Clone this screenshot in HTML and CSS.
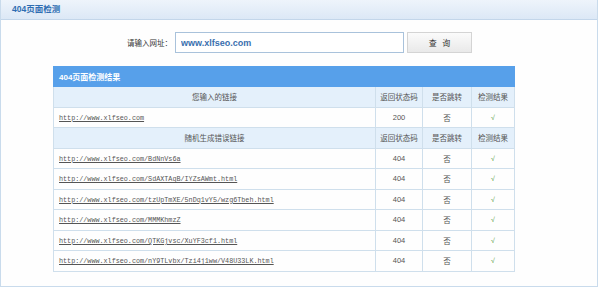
FILE: index.html
```html
<!DOCTYPE html>
<html lang="zh-CN">
<head>
        <meta charset="UTF-8" />
        <title>404页面检测</title>
        <link rel="stylesheet" href="styles.css">
</head>
<body>

<div class="panel">
        <div class="panel-title">404页面检测</div>

        <form class="search" onsubmit="return false;">
                <label for="url">请输入网址：</label>
                <input id="url" type="text" value="www.xlfseo.com">
                <button type="submit">查&nbsp;&nbsp;&nbsp;询</button>
        </form>

        <table class="result">
                <tr>
                        <th class="caption" colspan="4">404页面检测结果</th>
                </tr>
                <tr class="sub">
                        <td class="col-link">您输入的链接</td>
                        <td class="col-code">返回状态码</td>
                        <td class="col-jump">是否跳转</td>
                        <td class="col-ok">检测结果</td>
                </tr>
                <tr>
                        <td class="link"><a href="#">http://www.xlfseo.com</a></td>
                        <td>200</td>
                        <td>否</td>
                        <td class="ok">√</td>
                </tr>
                <tr class="sub">
                        <td>随机生成错误链接</td>
                        <td>返回状态码</td>
                        <td>是否跳转</td>
                        <td>检测结果</td>
                </tr>
                <tr>
                        <td class="link"><a href="#">http://www.xlfseo.com/BdNnVs6a</a></td>
                        <td>404</td>
                        <td>否</td>
                        <td class="ok">√</td>
                </tr>
                <tr>
                        <td class="link"><a href="#">http://www.xlfseo.com/SdAXTAqB/IYZsAWmt.html</a></td>
                        <td>404</td>
                        <td>否</td>
                        <td class="ok">√</td>
                </tr>
                <tr>
                        <td class="link"><a href="#">http://www.xlfseo.com/tzUpTmXE/5nDq1vY5/wzg6Tbeh.html</a></td>
                        <td>404</td>
                        <td>否</td>
                        <td class="ok">√</td>
                </tr>
                <tr>
                        <td class="link"><a href="#">http://www.xlfseo.com/MMMKhmzZ</a></td>
                        <td>404</td>
                        <td>否</td>
                        <td class="ok">√</td>
                </tr>
                <tr>
                        <td class="link"><a href="#">http://www.xlfseo.com/QTKGjvsc/XuYF3cf1.html</a></td>
                        <td>404</td>
                        <td>否</td>
                        <td class="ok">√</td>
                </tr>
                <tr>
                        <td class="link"><a href="#">http://www.xlfseo.com/nY9TLvbx/Tzi4j1ww/V48U33LK.html</a></td>
                        <td>404</td>
                        <td>否</td>
                        <td class="ok">√</td>
                </tr>
        </table>
</div>

</body>
</html>
```

FILE: styles.css
```css
body {
        margin: 0;
        background: #fff;
        font-family: "Liberation Sans", "Noto Sans CJK SC", sans-serif;
        color: #333;
}

.panel {
        box-sizing: border-box;
        width: 598px;
        height: 287px;
        border: 1px solid #c9dbec;
        border-top: none;
        background: #fefefe;
}

.panel-title {
        box-sizing: border-box;
        height: 20px;
        line-height: 19px;
        padding-left: 11px;
        background: linear-gradient(#eef4fb, #dce8f6);
        border-bottom: 1px solid #c3d6ea;
        color: #2f6db2;
        font-size: 8.5px;
        font-weight: bold;
}

.search {
        display: flex;
        align-items: center;
        margin: 12px 0 0 126px;
        height: 21px;
}

.search label {
        font-size: 7.5px;
        color: #333;
        width: 48px;
}

.search input {
        box-sizing: border-box;
        width: 229px;
        height: 21px;
        margin: 0;
        padding: 0 5px;
        border: 1px solid #a9c2db;
        color: #3a6fae;
        font-family: "Liberation Sans", sans-serif;
        font-size: 9px;
        font-weight: bold;
        outline: none;
}

.search button {
        box-sizing: border-box;
        width: 65px;
        height: 21px;
        margin-left: 3px;
        border: 1px solid #d4d4d4;
        background: linear-gradient(#fbfbfb, #e9e9e9);
        color: #333;
        font-family: "Noto Sans CJK SC", sans-serif;
        font-size: 8px;
        padding: 0;
}

.result {
        margin: 13px 0 0 52px;
        width: 462px;
        border-collapse: collapse;
        font-size: 7.5px;
        color: #555;
}

.result td, .result th {
        border: 1px solid #cfdfec;
        height: 19.5px;
        padding: 0;
        text-align: center;
}

.result th.caption {
        height: 19px;
        background: #57a0ea;
        border-color: #57a0ea;
        color: #fff;
        text-align: left;
        padding-left: 5px;
        font-size: 8px;
        font-weight: bold;
}

.result tr.sub td {
        background: #e4f0fb;
        color: #555;
}

.col-link { width: 321px; }
.col-code { width: 46px; }
.col-jump { width: 48px; }

.result td.link {
        text-align: left;
        padding-left: 5px;
}

.result td.link a {
        font-family: "Liberation Mono", monospace;
        font-size: 6.75px;
        color: #555;
}

.result td.ok {
        color: #5c9e47;
        font-size: 7px;
}
```
